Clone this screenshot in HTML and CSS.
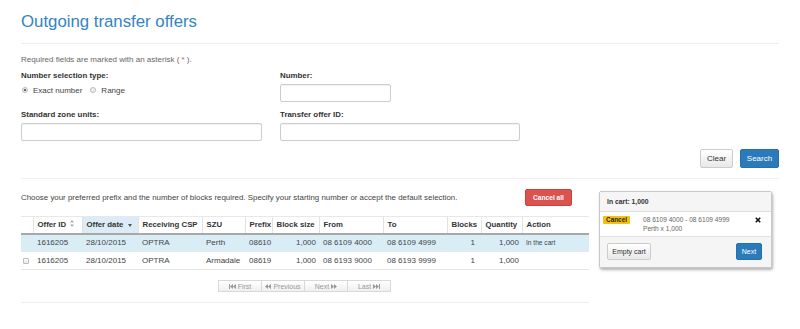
FILE: index.html
```html
<!DOCTYPE html>
<html lang="en">
<head>
<meta charset="utf-8">
<title>Outgoing transfer offers</title>
<link rel="stylesheet" href="styles.css">
</head>
<body>
<div class="page">
  <h1 class="title">Outgoing transfer offers</h1>
  <hr class="rule">
  <p class="req">Required fields are marked with an asterisk ( <span class="star">*</span> ).</p>

  <div class="form-grid">
    <div class="field">
      <div class="label">Number selection type:</div>
      <div class="radios">
        <span class="radio on"></span><span class="rtext">Exact number</span>
        <span class="radio second"></span><span class="rtext">Range</span>
      </div>
    </div>
    <div class="field">
      <div class="label">Number:</div>
      <div class="input short"></div>
    </div>
    <div class="field">
      <div class="label">Standard zone units:</div>
      <div class="input"></div>
    </div>
    <div class="field">
      <div class="label">Transfer offer ID:</div>
      <div class="input"></div>
    </div>
  </div>

  <div class="actions">
    <button class="btn btn-default clear">Clear</button>
    <button class="btn btn-primary search">Search</button>
  </div>
  <hr class="rule rule2">

  <div class="results">
    <div class="main">
      <div class="intro">
        <span>Choose your preferred prefix and the number of blocks required. Specify your starting number or accept the default selection.</span>
        <button class="btn btn-danger">Cancel all</button>
      </div>

      <table class="grid">
        <colgroup>
          <col class="c-chk"><col class="c-id"><col class="c-date"><col class="c-csp"><col class="c-szu"><col class="c-prefix"><col class="c-bsize"><col class="c-from"><col class="c-to"><col class="c-blocks"><col class="c-qty"><col class="c-action">
        </colgroup>
        <thead>
          <tr>
            <th class="first"></th>
            <th>Offer ID <svg class="sort" width="4" height="7" viewBox="0 0 4 7"><path d="M2 0 L4 2.6 H0 Z M0 4.4 H4 L2 7 Z" fill="#aaa"/></svg></th>
            <th class="sorted">Offer date <svg class="sort" width="4" height="3" viewBox="0 0 4 3"><path d="M0 0 H4 L2 3 Z" fill="#555"/></svg></th>
            <th>Receiving CSP</th>
            <th>SZU</th>
            <th>Prefix</th>
            <th>Block size</th>
            <th>From</th>
            <th>To</th>
            <th>Blocks</th>
            <th>Quantity</th>
            <th>Action</th>
          </tr>
        </thead>
        <tbody>
          <tr class="sel">
            <td></td>
            <td>1616205</td>
            <td>28/10/2015</td>
            <td>OPTRA</td>
            <td>Perth</td>
            <td>08610</td>
            <td class="num">1,000</td>
            <td>08 6109 4000</td>
            <td>08 6109 4999</td>
            <td class="num blocks">1</td>
            <td class="num">1,000</td>
            <td class="small">In the cart</td>
          </tr>
          <tr>
            <td><span class="check"></span></td>
            <td>1616205</td>
            <td>28/10/2015</td>
            <td>OPTRA</td>
            <td>Armadale</td>
            <td>08619</td>
            <td class="num">1,000</td>
            <td>08 6193 9000</td>
            <td>08 6193 9999</td>
            <td class="num blocks">1</td>
            <td class="num">1,000</td>
            <td></td>
          </tr>
        </tbody>
      </table>

      <div class="pager">
        <span class="pg"><svg width="7" height="5" viewBox="0 0 7 5"><path d="M0 0 H1 V5 H0 Z M1 2.5 L4 0 V5 Z M4 2.5 L7 0 V5 Z" fill="#999"/></svg>First</span>
        <span class="pg"><svg width="6" height="5" viewBox="0 0 6 5"><path d="M0 2.5 L3 0 V5 Z M3 2.5 L6 0 V5 Z" fill="#999"/></svg>Previous</span>
        <span class="pg">Next<svg width="6" height="5" viewBox="0 0 6 5"><path d="M0 0 L3 2.5 L0 5 Z M3 0 L6 2.5 L3 5 Z" fill="#999"/></svg></span>
        <span class="pg">Last<svg width="7" height="5" viewBox="0 0 7 5"><path d="M0 0 L3 2.5 L0 5 Z M3 0 L6 2.5 L3 5 Z M6 0 H7 V5 H6 Z" fill="#999"/></svg></span>
      </div>
      <hr class="rule rule3">
    </div>

    <aside class="cart">
      <div class="cart-head">In cart: 1,000</div>
      <div class="cart-body">
        <span class="badge">Cancel</span>
        <div class="item">
          <div>08 6109 4000 - 08 6109 4999</div>
          <div>Perth x 1,000</div>
        </div>
        <svg class="remove" width="6" height="6" viewBox="0 0 6 6"><path d="M0.8 0.8 L5.2 5.2 M5.2 0.8 L0.8 5.2" stroke="#111" stroke-width="1.6"/></svg>
      </div>
      <div class="cart-foot">
        <button class="btn btn-default empty">Empty cart</button>
        <button class="btn btn-primary next">Next</button>
      </div>
    </aside>
  </div>
</div>
</body>
</html>
```

FILE: styles.css
```css
* { box-sizing: border-box; }

body {
  margin: 0;
  font-family: "Liberation Sans", Arial, sans-serif;
  font-size: 8px;
  color: #333;
  background: #fff;
}

.page { padding: 0 21px; }

.title {
  margin: 0;
  padding-top: 12px;
  font-size: 16.8px;
  line-height: 19px;
  font-weight: normal;
  color: #3384c4;
}

.rule {
  margin: 12px 0 0;
  height: 0;
  border: 0;
  border-top: 1px solid #eee;
}
.rule2 { margin-top: 10px; }
.rule3 { margin-top: 10px; }

.req {
  margin: 10px 0 0;
  line-height: 12px;
  color: #666;
}
.star { color: #d9534f; }

.form-grid {
  display: grid;
  grid-template-columns: 241px 240px;
  column-gap: 18px;
  row-gap: 7px;
  margin-top: 4px;
}

.label {
  font-weight: bold;
  font-size: 7.9px;
  line-height: 12px;
  height: 12px;
  margin-bottom: 2px;
}

.input {
  height: 18px;
  border: 1px solid #ccc;
  border-radius: 2px;
  background: #fff;
  box-shadow: inset 0 1px 1px rgba(0,0,0,.06);
}
.input.short { width: 111px; }

.radios {
  display: flex;
  align-items: center;
  height: 12px;
  color: #444;
}
.radio {
  width: 6px;
  height: 6px;
  border-radius: 50%;
  border: 1px solid #bbb;
  background: #eee;
  margin: 0 5px 0 1px;
}
.radio.on { background: radial-gradient(circle, #666 0 1.1px, #eee 1.6px); }
.radio.second { margin-left: 8px; }

.actions {
  display: flex;
  justify-content: flex-end;
  gap: 7px;
  margin-top: 8px;
}

.btn {
  font-family: inherit;
  font-size: 8px;
  height: 19px;
  padding: 0;
  border-radius: 2px;
  border: 1px solid #ccc;
  cursor: pointer;
}
.btn-default { background: linear-gradient(#fff, #e8e8e8); color: #333; }
.btn-primary { background: #2b7bba; border-color: #2770aa; color: #fff; }
.clear { width: 33px; }
.search { width: 39px; }

.results {
  display: flex;
  align-items: flex-start;
  gap: 10px;
  margin-top: 10px;
}
.main { width: 568px; }

.intro {
  display: flex;
  justify-content: space-between;
  align-items: center;
  height: 17px;
  padding-right: 17px;
  color: #444;
  font-size: 7.9px;
}
.btn-danger {
  background: #d9534f;
  border-color: #d43f3a;
  color: #fff;
  font-weight: bold;
  font-size: 6.6px;
  width: 47px;
  height: 17px;
}

.grid {
  width: 568px;
  margin-top: 10px;
  border-collapse: collapse;
  table-layout: fixed;
}
.c-chk { width: 12px; }
.c-id { width: 49px; }
.c-date { width: 56px; }
.c-csp { width: 64px; }
.c-szu { width: 43px; }
.c-prefix { width: 27px; }
.c-bsize { width: 47px; }
.c-from { width: 64px; }
.c-to { width: 64px; }
.c-blocks { width: 34px; }
.c-qty { width: 41px; }
.c-action { width: 67px; }

.grid th {
  height: 17px;
  padding: 0 4px;
  text-align: left;
  font-weight: bold;
  font-size: 7.8px;
  white-space: nowrap;
  border-top: 1px solid #e8e8e8;
  border-left: 1px solid #e2e2e2;
  border-bottom: 2px solid #a8a8a8;
}
.grid th.first { border-left: 0; }
.grid th.sorted { background: #dcebf5; }
.sort { margin-left: 2px; vertical-align: 0; }

.grid td {
  height: 18px;
  padding: 0 4px;
  white-space: nowrap;
  color: #444;
  border-bottom: 1px solid #e6e6e6;
}
.grid tr.sel td { background: #d9edf7; }
.grid td.num { text-align: right; padding-right: 3px; }
.grid td.blocks { padding-right: 6px; }
.grid td.small { font-size: 6.6px; }

.check {
  display: block;
  width: 6px;
  height: 6px;
  margin-left: -2px;
  border: 1px solid #bbb;
  border-radius: 1px;
  background: linear-gradient(#fff, #e6e6e6);
}

.pager {
  display: flex;
  justify-content: center;
  margin-top: 10px;
}
.pg {
  display: flex;
  align-items: center;
  justify-content: center;
  gap: 2px;
  width: 44px;
  height: 12px;
  margin-left: -1px;
  border: 1px solid #d8d8d8;
  background: linear-gradient(#fff, #f0f0f0);
  color: #999;
  font-size: 7px;
}

.cart {
  width: 173px;
  margin-top: 2px;
  border: 1px solid #c8c8c8;
  border-radius: 2px;
  box-shadow: 1px 2px 3px rgba(0,0,0,.3);
  background: #fff;
}
.cart-head {
  height: 20px;
  line-height: 19px;
  padding-left: 7px;
  background: #f5f5f5;
  border-bottom: 1px solid #ddd;
  font-weight: bold;
  font-size: 6.8px;
}
.cart-body {
  display: flex;
  align-items: flex-start;
  height: 25px;
  padding: 3px 10px 0 3px;
  border-bottom: 1px solid #e2e2e2;
}
.badge {
  width: 27px;
  height: 8px;
  line-height: 8px;
  margin-top: 1px;
  margin-right: 13px;
  text-align: center;
  background: #f4c20d;
  color: #222;
  font-weight: bold;
  font-size: 6.4px;
  border-radius: 1px;
}
.item {
  font-size: 6.6px;
  line-height: 9px;
  color: #666;
}
.remove { margin-left: auto; margin-top: 2px; }

.cart-foot {
  display: flex;
  justify-content: space-between;
  height: 30px;
  padding: 6px 9px 0 7px;
  background: #f5f5f5;
}
.empty { width: 44px; height: 17px; font-size: 7px; }
.next { width: 26px; height: 17px; font-size: 7px; }
```
